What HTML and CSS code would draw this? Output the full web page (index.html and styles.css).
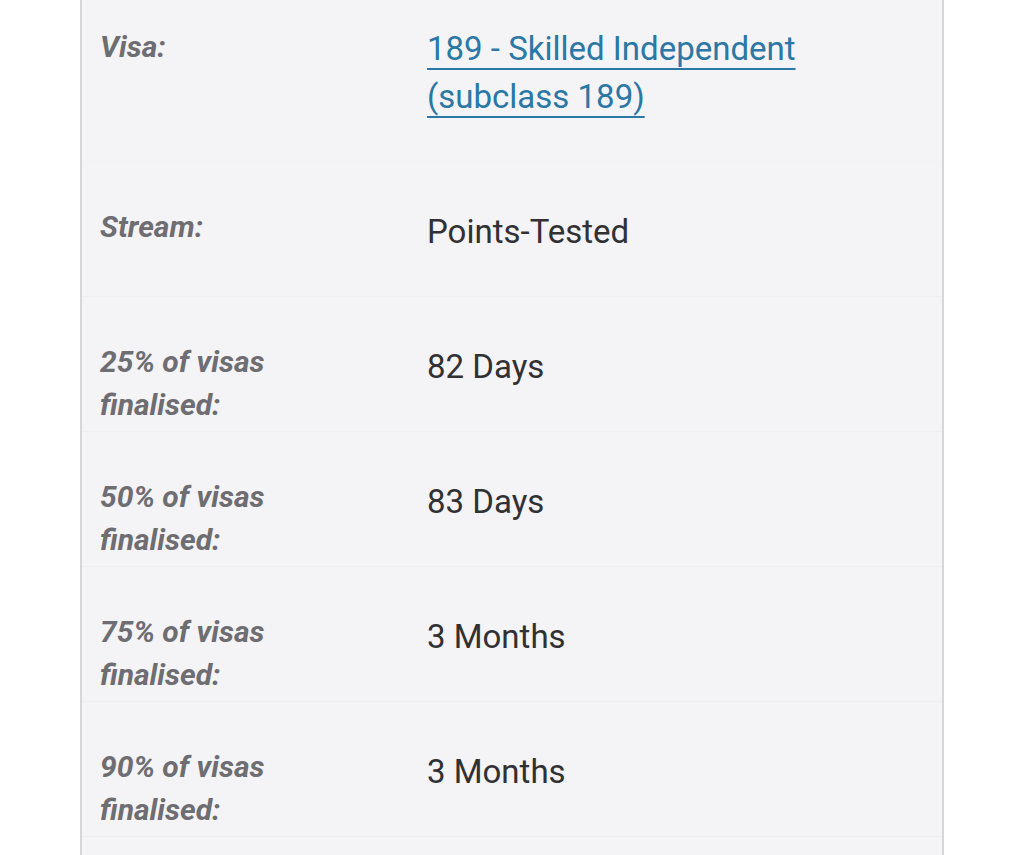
FILE: index.html
```html
<!DOCTYPE html>
<html lang="en">
<head>
<meta charset="utf-8">
<title>Visa processing times</title>
<link rel="stylesheet" href="styles.css">
</head>
<body>
<div class="panel">
  <div class="row row-first">
    <div class="label">Visa:</div>
    <div class="value"><a class="link" href="#">189 - Skilled Independent (subclass 189)</a></div>
  </div>
  <div class="row">
    <div class="label">Stream:</div>
    <div class="value">Points-Tested</div>
  </div>
  <div class="row">
    <div class="label">25% of visas finalised:</div>
    <div class="value">82 Days</div>
  </div>
  <div class="row">
    <div class="label">50% of visas finalised:</div>
    <div class="value">83 Days</div>
  </div>
  <div class="row">
    <div class="label">75% of visas finalised:</div>
    <div class="value">3 Months</div>
  </div>
  <div class="row">
    <div class="label">90% of visas finalised:</div>
    <div class="value">3 Months</div>
  </div>
</div>
</body>
</html>
```
FILE: styles.css
```css
html, body {
  margin: 0;
  padding: 0;
  background: #ffffff;
  overflow: hidden;
}
body {
  font-family: Roboto, "Noto Sans", Arial, sans-serif;
  height: 855px;
}
.panel {
  margin-left: 80px;
  width: 864px;
  box-sizing: border-box;
  background: #f4f3f6;
  border-left: 2px solid #d6d5da;
  border-right: 2px solid #d6d5da;
  padding-bottom: 40px;
}
.row {
  display: grid;
  grid-template-columns: 327px 1fr;
  align-items: start;
  box-sizing: border-box;
  min-height: 135px;
  padding: 43px 20px 4px 18px;
  border-bottom: 1px solid #efeef1;
}
.row-first {
  min-height: 162px;
  padding-top: 25px;
  border-bottom-color: #f2f1f4;
}
.label {
  font-size: 30px;
  line-height: 43px;
  font-weight: 700;
  font-style: italic;
  color: #6e6d72;
  width: 200px;
}
.value {
  font-size: 33px;
  line-height: 48px;
  color: #313134;
  max-width: 400px;
  padding-top: 3px;
}
.row-first .value {
  padding-top: 0;
}
.link {
  color: #2b77a5;
  text-decoration: underline;
  text-decoration-thickness: 2px;
  text-underline-offset: 8px;
}
```
